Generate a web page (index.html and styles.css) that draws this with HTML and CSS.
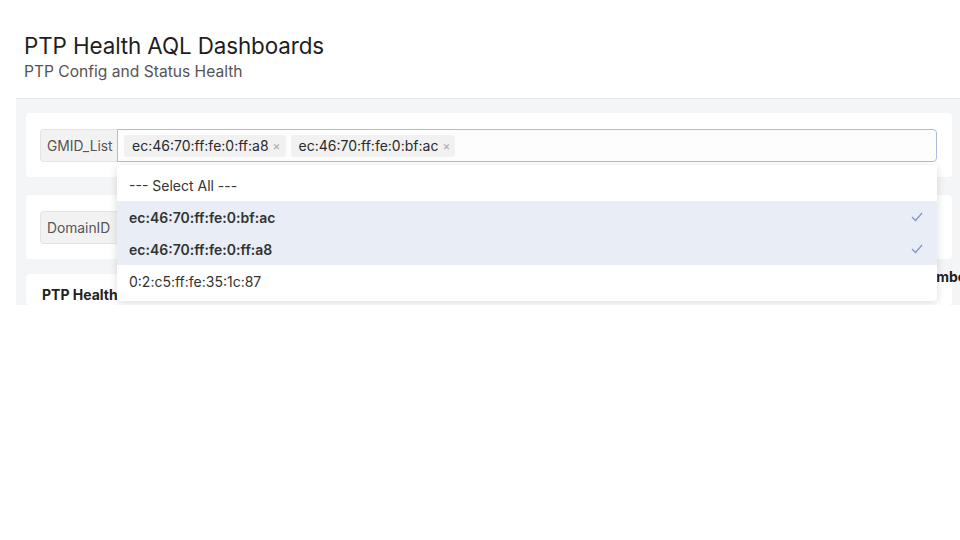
FILE: index.html
```html
<!DOCTYPE html>
<html>
<head>
<meta charset="utf-8">
<link rel="stylesheet" href="styles.css">
</head>
<body>
<header class="head">
  <h1 class="title">PTP Health AQL Dashboards</h1>
  <p class="subtitle">PTP Config and Status Health</p>
</header>
<section class="panel">
  <div class="card card-filter">
    <div class="field">
      <span class="addon">GMID_List</span>
      <div class="multi">
        <span class="tag">ec:46:70:ff:fe:0:ff:a8 <span class="x">×</span></span>
        <span class="tag">ec:46:70:ff:fe:0:bf:ac <span class="x">×</span></span>
        <ul class="menu">
          <li class="opt">--- Select All ---</li>
          <li class="opt sel">ec:46:70:ff:fe:0:bf:ac <svg class="chk" viewBox="0 0 12 10" width="12" height="10"><polyline points="1,5 4.5,8.5 11,1" fill="none" stroke="#7b95c6" stroke-width="1.2"/></svg></li>
          <li class="opt sel">ec:46:70:ff:fe:0:ff:a8 <svg class="chk" viewBox="0 0 12 10" width="12" height="10"><polyline points="1,5 4.5,8.5 11,1" fill="none" stroke="#7b95c6" stroke-width="1.2"/></svg></li>
          <li class="opt">0:2:c5:ff:fe:35:1c:87</li>
        </ul>
      </div>
    </div>
  </div>
  <div class="card card-filter">
    <div class="field">
      <span class="addon">DomainID</span>
      <div class="single"></div>
    </div>
  </div>
  <div class="card card-table">
    <span class="ctitle">PTP Health</span>
    <span class="ctitle ctitle-right">Number</span>
  </div>
</section>
</body>
</html>
```
FILE: styles.css
```css
* { box-sizing: border-box; }
html, body { margin: 0; padding: 0; background: #fff; }
body { font-family: Inter, "Liberation Sans", Arial, sans-serif; color: #222; width: 960px; height: 540px; overflow: hidden; }
.head { padding: 32px 24px 0; height: 98px; }
.title { margin: 0; font-size: 22.4px; font-weight: 400; line-height: 27px; color: #1e1e1e; letter-spacing: -0.1px; }
.subtitle { margin: 3px 0 0; font-size: 15.6px; line-height: 19px; color: #555; }
.panel {
  margin-left: 16px; height: 207px; overflow: hidden;
  background: #f4f5f7; border-top: 1px solid #e7e8ea;
  padding: 14px 8px 0 10px;
  display: flex; flex-direction: column; gap: 18px;
}
.card { background: #fff; border-radius: 4px; }
.card-filter { padding: 16px 15px 15px 14px; }
.card-filter + .card-filter + .card { margin-top: -3px; }
.field { display: flex; height: 33px; }
.addon {
  display: flex; align-items: center; padding: 0 6px;
  font-size: 13.8px; color: #555; background: #f2f2f3;
  border: 1px solid #e4e4e6; border-right: 0; border-radius: 4px 0 0 4px;
  width: 77px; white-space: nowrap;
}
.multi {
  position: relative; flex: 1; display: flex; align-items: center; gap: 5px;
  padding: 0 6px; border: 1px solid #a9bde0; border-radius: 0 4px 4px 0; background: #fdfdfd;
}
.single { flex: 1; border: 1px solid #e4e4e6; border-radius: 0 4px 4px 0; }
.tag {
  display: inline-flex; align-items: center; height: 22px; padding: 0 5px 0 8px;
  background: #f1f1f2; border-radius: 3px; font-size: 14px; color: #2a2a2a; white-space: nowrap;
}
.x { color: #aaa; font-size: 12px; margin-left: 4px; }
.menu {
  position: absolute; left: -1px; right: -1px; top: 35px; z-index: 5;
  list-style: none; margin: 0; padding: 4px 0; background: #fff;
  box-shadow: 0 2px 8px rgba(0,0,0,0.14); border-radius: 0 0 4px 4px;
}
.opt {
  height: 32px; display: flex; align-items: center; justify-content: space-between;
  padding: 0 14px 0 12px; font-size: 14px; color: #333;
}
.opt.sel { background: #e8edf6; font-weight: 600; color: #333; }
.card-table { padding: 0 16px; display: flex; height: 60px; }
.ctitle { font-size: 14px; font-weight: 700; color: #222; white-space: nowrap; flex-shrink: 0; }
.ctitle:first-child { margin-top: 12px; }
.ctitle-right { margin-left: 799px; margin-top: -6px; }
```
